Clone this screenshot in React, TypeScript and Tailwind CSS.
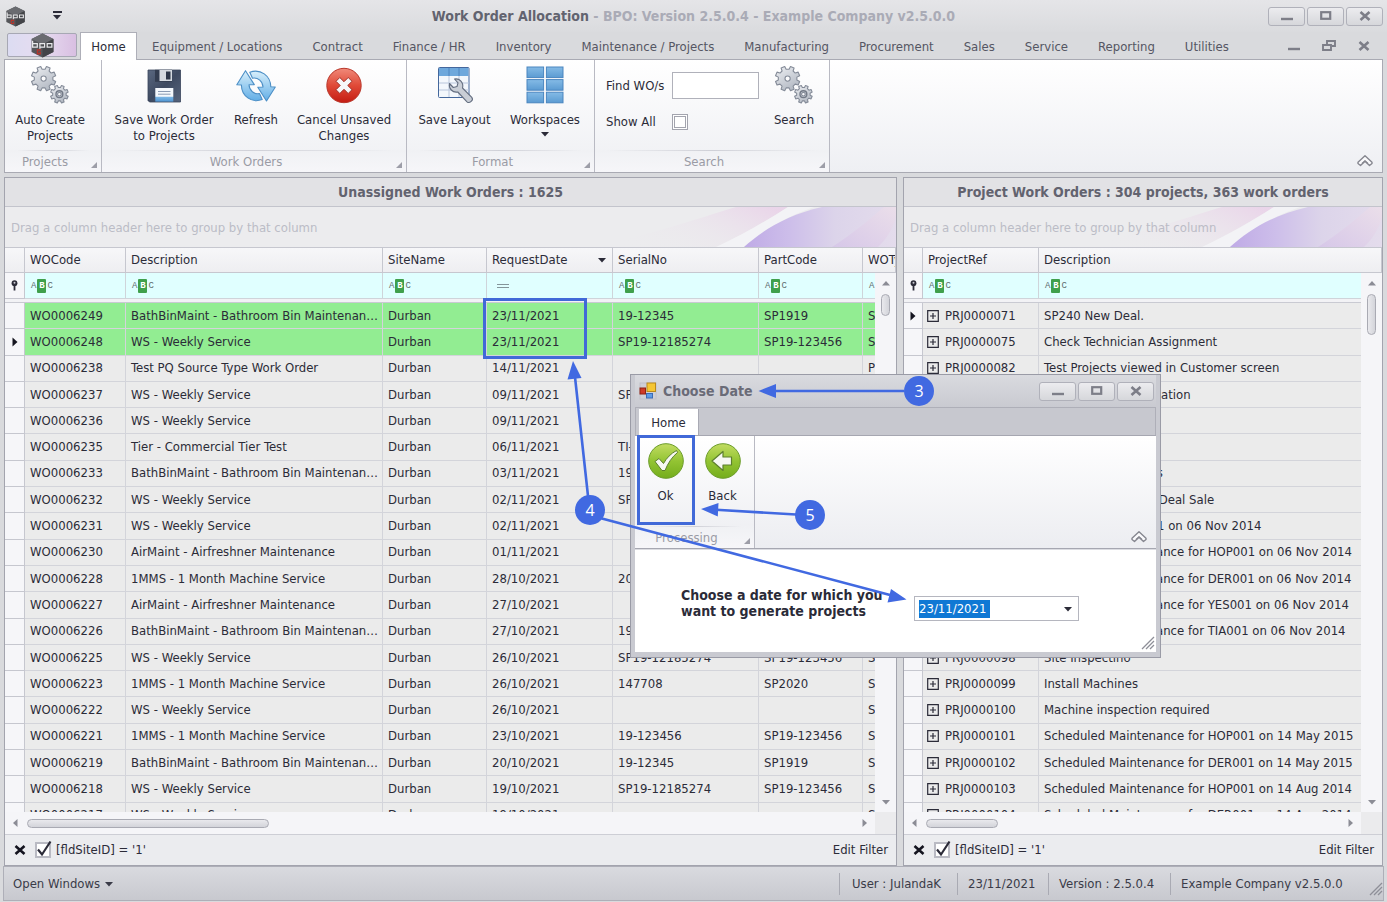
import React from "react";

const BATH_BIN = "BathBinMaint - Bathroom Bin Maintenance Service";

const rows: string[][] = [
  ["WO0006249", BATH_BIN, "23/11/2021", "19-12345", "SP1919", "S"],
  ["WO0006248", "WS - Weekly Service", "23/11/2021", "SP19-12185274", "SP19-123456", "S"],
  ["WO0006238", "Test PQ Source Type Work Order", "14/11/2021", "", "", "P"],
  ["WO0006237", "WS - Weekly Service", "09/11/2021", "SP19-12185274", "SP19-123456", "S"],
  ["WO0006236", "WS - Weekly Service", "09/11/2021", "", "", "S"],
  ["WO0006235", "Tier - Commercial Tier Test", "06/11/2021", "TI-12345", "", "S"],
  ["WO0006233", BATH_BIN, "03/11/2021", "19-12345", "SP1919", "S"],
  ["WO0006232", "WS - Weekly Service", "02/11/2021", "SP19-12185274", "SP19-123456", "S"],
  ["WO0006231", "WS - Weekly Service", "02/11/2021", "", "", "S"],
  ["WO0006230", "AirMaint - Airfreshner Maintenance", "01/11/2021", "", "", "S"],
  ["WO0006228", "1MMS - 1 Month Machine Service", "28/10/2021", "2012345", "SP2020", "S"],
  ["WO0006227", "AirMaint - Airfreshner Maintenance", "27/10/2021", "", "", "S"],
  ["WO0006226", BATH_BIN, "27/10/2021", "19-12345", "SP1919", "S"],
  ["WO0006225", "WS - Weekly Service", "26/10/2021", "SP19-12185274", "SP19-123456", "S"],
  ["WO0006223", "1MMS - 1 Month Machine Service", "26/10/2021", "147708", "SP2020", "S"],
  ["WO0006222", "WS - Weekly Service", "26/10/2021", "", "", "S"],
  ["WO0006221", "1MMS - 1 Month Machine Service", "23/10/2021", "19-123456", "SP19-123456", "S"],
  ["WO0006219", BATH_BIN, "20/10/2021", "19-12345", "SP1919", "S"],
  ["WO0006218", "WS - Weekly Service", "19/10/2021", "SP19-12185274", "SP19-123456", "S"],
  ["WO0006217", "WS - Weekly Service", "19/10/2021", "", "", "S"],
];

const projects: string[][] = [
  ["PRJ0000071", "SP240 New Deal."],
  ["PRJ0000075", "Check Technician Assignment"],
  ["PRJ0000082", "Test Projects viewed in Customer screen"],
  ["PRJ0000083", "New Machine Installation"],
  ["PRJ0000085", "Call Out"],
  ["PRJ0000086", "Site Visit"],
  ["PRJ0000088", "Relocate Dispensers"],
  ["PRJ0000090", "SP240 Combo New Deal Sale"],
  ["PRJ0000091", "Inspection at TIA001 on 06 Nov 2014"],
  ["PRJ0000093", "Scheduled Maintenance for HOP001 on 06 Nov 2014"],
  ["PRJ0000094", "Scheduled Maintenance for DER001 on 06 Nov 2014"],
  ["PRJ0000095", "Scheduled Maintenance for YES001 on 06 Nov 2014"],
  ["PRJ0000096", "Scheduled Maintenance for TIA001 on 06 Nov 2014"],
  ["PRJ0000098", "Site Inspectino"],
  ["PRJ0000099", "Install Machines"],
  ["PRJ0000100", "Machine inspection required"],
  ["PRJ0000101", "Scheduled Maintenance for HOP001 on 14 May 2015"],
  ["PRJ0000102", "Scheduled Maintenance for DER001 on 14 May 2015"],
  ["PRJ0000103", "Scheduled Maintenance for HOP001 on 14 Aug 2014"],
  ["PRJ0000104", "Scheduled Maintenance for DER001 on 14 Aug 2014"],
];

const menuTabs = [
  "Equipment / Locations", "Contract", "Finance / HR", "Inventory", "Maintenance / Projects",
  "Manufacturing", "Procurement", "Sales", "Service", "Reporting", "Utilities",
];

/* ---------- drawings ---------- */

function gearPath(cx: number, cy: number, outer: number, inner: number, teeth: number, hole: number) {
  const pts: string[] = [];
  const step = (Math.PI * 2) / teeth;
  for (let i = 0; i < teeth; i++) {
    const a = i * step - Math.PI / 2 + step / 2;
    const at = (r: number, t: number) => `${(cx + r * Math.cos(a + t)).toFixed(2)} ${(cy + r * Math.sin(a + t)).toFixed(2)}`;
    pts.push(`${at(inner, -step * 0.3)} L${at(outer, -step * 0.2)} L${at(outer, step * 0.2)} L${at(inner, step * 0.3)}`);
  }
  return `M${pts.join(" L")} Z M${cx - hole} ${cy} a${hole} ${hole} 0 1 0 ${hole * 2} 0 a${hole} ${hole} 0 1 0 ${-hole * 2} 0 Z`;
}

const GearsIcon = () => (
  <svg width="40" height="40" viewBox="0 0 40 40" aria-hidden="true">
    <defs>
      <linearGradient id="gear" x1="0" y1="0" x2="0.6" y2="1">
        <stop offset="0" stopColor="#eef0f3" />
        <stop offset="1" stopColor="#b4bac4" />
      </linearGradient>
    </defs>
    <g fill="url(#gear)" stroke="#848b98" strokeWidth="1.1" strokeLinejoin="round" fillRule="evenodd">
      <path d={gearPath(13.6, 13.6, 12.4, 9.4, 8, 2.6)} />
      <path d={gearPath(29.4, 29.2, 9, 6.8, 8, 1.8)} />
    </g>
    <circle cx="29.4" cy="29.2" r="3.4" fill="none" stroke="#737a87" strokeWidth="1.4" />
  </svg>
);

const FloppyIcon = () => (
  <svg width="40" height="40" viewBox="0 0 40 40" aria-hidden="true">
    <defs>
      <linearGradient id="flop" x1="0" y1="0" x2="1" y2="1">
        <stop offset="0" stopColor="#5a6880" />
        <stop offset="0.5" stopColor="#3e4a61" />
        <stop offset="1" stopColor="#56647c" />
      </linearGradient>
      <linearGradient id="flopLabel" x1="0" y1="0" x2="0" y2="1">
        <stop offset="0.62" stopColor="#f4f8fc" />
        <stop offset="0.64" stopColor="#7fb8e6" />
        <stop offset="1" stopColor="#4f95d2" />
      </linearGradient>
    </defs>
    <path d="M4 5h32.500v32H5.500L4 35.500z" fill="url(#flop)" stroke="#39445a" strokeWidth="0.8" />
    <rect x="11" y="4.800" width="17" height="12" fill="#333d50" />
    <rect x="15.500" y="5" width="12.500" height="11" fill="#d5dae1" />
    <rect x="22" y="6.500" width="4.500" height="8" fill="#2e384b" />
    <rect x="11.300" y="23" width="18" height="13.600" fill="url(#flopLabel)" />
    <path d="M14 26.500h12.500M14 29.200h12.500" stroke="#8a9ab3" strokeWidth="1" />
  </svg>
);

const RefreshIcon = () => (
  <svg width="40" height="40" viewBox="0 0 40 40" aria-hidden="true">
    <defs>
      <linearGradient id="refr" x1="0" y1="0" x2="0" y2="1">
        <stop offset="0" stopColor="#d8effb" />
        <stop offset="1" stopColor="#62aee6" />
      </linearGradient>
    </defs>
    <g fill="url(#refr)" stroke="#4c8fc6" strokeWidth="1.1" strokeLinejoin="round">
      <path d="M9.500 5.700 L18.300 19.600 L13 19.800 C13.300 25.500 18 29.600 23.500 28.600 L26.200 34.600 C15.500 38.500 5.500 31 5.400 20 L0.800 19.800 Z" />
      <path d="M30.500 36 L21.800 22.200 L27 22 C26.800 16.300 22 12.300 16.500 13.200 L13.800 7.200 C24.500 3.300 34.600 10.800 34.800 21.800 L39.300 22 Z" />
    </g>
  </svg>
);

const CancelIcon = () => (
  <svg width="40" height="40" viewBox="0 0 40 40" aria-hidden="true">
    <defs>
      <linearGradient id="canc" x1="0" y1="0" x2="0" y2="1">
        <stop offset="0" stopColor="#f08a7a" />
        <stop offset="0.5" stopColor="#e04a38" />
        <stop offset="1" stopColor="#c41c12" />
      </linearGradient>
    </defs>
    <circle cx="20" cy="20.500" r="17.200" fill="url(#canc)" stroke="#b9382c" strokeWidth="1" />
    <path d="M15.800 12.500 L20 16.700 L24.200 12.500 L28 16.300 L23.800 20.500 L28 24.700 L24.200 28.500 L20 24.300 L15.800 28.500 L12 24.700 L16.200 20.500 L12 16.300 Z" fill="#f7f7f9" stroke="#a03028" strokeWidth="1" strokeLinejoin="round" />
  </svg>
);

const LayoutIcon = () => (
  <svg width="40" height="40" viewBox="0 0 40 40" aria-hidden="true">
    <rect x="3.500" y="2.500" width="30.500" height="30" rx="1" fill="#f3f7fc" stroke="#44679c" />
    <rect x="4" y="3" width="29.500" height="8" fill="#6ea8dc" />
    <path d="M14 3v8M24 3v8" stroke="#4f86c0" />
    <path d="M14 11v21M24 11v21M4 18h30M4 25h30" stroke="#b9c6dc" />
    <path d="M14.500 18.500 C13.500 23.500 17.500 28 22.800 27 L32 36.800 C34.500 39 39 35 36.800 32.300 L27.500 23 C29 17.500 24.500 13 19.500 14 L23 17.800 L22 21.500 L18.300 22.500 Z" fill="#c9ced6" stroke="#646e80" strokeWidth="1.100" strokeLinejoin="round" />
  </svg>
);

const WorkspacesIcon = () => (
  <svg width="40" height="40" viewBox="0 0 40 40" aria-hidden="true">
    <defs>
      <linearGradient id="wsp" x1="0" y1="0" x2="0" y2="1">
        <stop offset="0" stopColor="#85bbe6" />
        <stop offset="1" stopColor="#5b9bd2" />
      </linearGradient>
    </defs>
    {[2, 14.6, 27.2].map((y) =>
      [2, 21.4].map((x) => (
        <rect key={`${x}-${y}`} x={x} y={y} width="16.600" height="10.600" fill="url(#wsp)" stroke="#4a85bf" strokeWidth="1" />
      )),
    )}
  </svg>
);

const GreenIcon = ({ kind }: { kind: "ok" | "back" }) => (
  <svg width="40" height="40" viewBox="0 0 40 40" aria-hidden="true">
    <defs>
      <linearGradient id="grn" x1="0" y1="0" x2="0" y2="1">
        <stop offset="0" stopColor="#c2dc62" />
        <stop offset="0.5" stopColor="#93c433" />
        <stop offset="1" stopColor="#74ad1c" />
      </linearGradient>
    </defs>
    <circle cx="20" cy="20" r="17.300" fill="url(#grn)" stroke="#6b9c2a" strokeWidth="1" />
    {kind === "ok" ? (
      <path d="M9 20.500 L13 17.500 L17.500 22.500 C20.500 17 25 12.500 30.500 9.500 L31.500 11.500 C26 16 22 22 19 29.500 L16 29.500 Z" fill="#f6f8f2" stroke="#5c7f2c" strokeWidth="1" strokeLinejoin="round" />
    ) : (
      <path d="M9 20 L20 10.500 L20 16 L28.500 16 L28.500 24 L20 24 L20 29.500 Z" fill="#f6f8f2" stroke="#5c7f2c" strokeWidth="1.200" strokeLinejoin="round" />
    )}
  </svg>
);

const HexLogo = ({ size }: { size: number }) => (
  <svg width={size} height={size} viewBox="0 0 24 24" aria-hidden="true">
    <path d="M12 0.500 L22.500 5.800 V18.200 L12 23.500 L1.500 18.200 V5.800 Z" fill="#55565a" />
    <path d="M12 0.500 L22.500 5.800 L12 11 L1.500 5.800 Z" fill="#6a6b70" />
    <path d="M12 11 L22.500 5.800 V18.200 L12 23.500 Z" fill="#434448" />
    <path d="M2.500 7.500v6h4.500v-3.200h-4.500M9.500 15v-4.700h4.500v3.200h-4.500M16.500 10.300h4.500v3.200h-4.500z" fill="none" stroke="#e8e8ea" strokeWidth="1.200" />
    <path d="M10.500 16.300h-3.300v3.700h2.600v-2" fill="none" stroke="#b5342c" strokeWidth="1.400" />
  </svg>
);

const FormIcon = () => (
  <svg width="18" height="18" viewBox="0 0 18 18" aria-hidden="true">
    <rect x="1" y="1" width="16" height="16" fill="#cfcfd6" stroke="#c0c0c8" />
    <rect x="8" y="1" width="8.500" height="8.500" fill="#f5c634" stroke="#b98a1c" />
    <rect x="1" y="6" width="5.500" height="6" fill="#cf3a26" stroke="#8f2214" />
    <rect x="7.500" y="11.500" width="6" height="4.500" fill="#5f9be6" stroke="#3a6bb5" />
  </svg>
);

const Triangle = ({ dir, className }: { dir: "up" | "down" | "left" | "right"; className?: string }) => {
  const shape = { down: "M1 3h8l-4 4.500z", up: "M1 7.500h8l-4 -4.500z", left: "M7.500 1v8l-4.500 -4z", right: "M2.500 1v8l4.500 -4z" }[dir];
  return (
    <svg width="10" height="10" viewBox="0 0 10 10" className={className} aria-hidden="true">
      <path d={shape} fill="currentColor" />
    </svg>
  );
};

const Collapse = () => (
  <svg width="18" height="14" viewBox="0 0 18 14" aria-hidden="true">
    <path d="M2 8.200 L9 1.800 L16 8.200 V9.500 L13.500 11.500 L9 7.200 L4.500 11.500 L2 9.500 Z" fill="#fafafc" stroke="#85868f" strokeWidth="1.400" strokeLinejoin="round" />
    <path d="M6 9.500 L9 6.800 L12 9.500" fill="none" stroke="#85868f" strokeWidth="1.200" />
  </svg>
);

const Grip = () => (
  <svg width="14" height="14" viewBox="0 0 14 14" aria-hidden="true">
    <path d="M1 13 L13 1 M5 13 L13 5 M9 13 L13 9" stroke="#8e8f98" strokeWidth="1.300" />
  </svg>
);

const Glyph = ({ kind }: { kind: "min" | "max" | "close" | "restore" }) => (
  <svg width="14" height="12" viewBox="0 0 14 12" aria-hidden="true" fill="none" stroke="#7d7e88">
    {kind === "min" && <path d="M1 9h12" strokeWidth="2.400" />}
    {kind === "max" && <rect x="2.200" y="2.200" width="9" height="6.600" strokeWidth="2.200" />}
    {kind === "close" && <path d="M2.500 2 L11.500 10 M11.500 2 L2.500 10" strokeWidth="2.600" />}
    {kind === "restore" && <path d="M5 4V1h8v5h-3M1 5h8v5h-8z" strokeWidth="1.900" />}
  </svg>
);

const Swoosh = ({ id }: { id: string }) => (
  <svg className="absolute right-0 top-0 h-full w-[310px]" viewBox="0 0 310 40" preserveAspectRatio="none" aria-hidden="true">
    <defs>
      <linearGradient id={`${id}p`} x1="0" y1="0.6" x2="1" y2="0.2">
        <stop offset="0" stopColor="#ececee" stopOpacity="0" />
        <stop offset="0.5" stopColor="#eadbea" stopOpacity="0.4" />
        <stop offset="1" stopColor="#e8c6e6" />
      </linearGradient>
      <linearGradient id={`${id}v`} x1="0" y1="0" x2="1" y2="0">
        <stop offset="0" stopColor="#bfaae6" />
        <stop offset="0.3" stopColor="#cdbeea" />
        <stop offset="0.6" stopColor="#dcd4ea" />
        <stop offset="1" stopColor="#e4dcec" />
      </linearGradient>
      <linearGradient id={`${id}w`} x1="0" y1="1" x2="1" y2="0">
        <stop offset="0" stopColor="#d5c4e8" />
        <stop offset="1" stopColor="#ecdfe9" />
      </linearGradient>
    </defs>
    <path d="M0 40 C60 30 110 12 150 0 H202 C180 14 160 26 130 40 Z" fill={`url(#${id}p)`} opacity="0.6" />
    <path d="M130 40 C160 26 180 14 202 0 H228 C200 10 176 24 158 40 Z" fill="#f3f3f6" />
    <path d="M158 40 C176 24 200 8 236 0 H310 V40 Z" fill={`url(#${id}v)`} />
    <path d="M246 40 C268 26 284 12 298 0 H310 V10 C306 24 300 32 292 40 Z" fill={`url(#${id}w)`} opacity="0.8" />
  </svg>
);

/* ---------- small controls ---------- */

const WinButton = ({ kind }: { kind: "min" | "max" | "close" }) => (
  <button aria-label={kind} className="flex h-[19px] w-[37px] items-center justify-center rounded-[3px] border border-[#b0b1ba] bg-gradient-to-b from-[#ececef] to-[#d6d7db]">
    <Glyph kind={kind} />
  </button>
);

const RibbonButton = ({ icon, lines, className, arrow }: { icon: React.ReactNode; lines: string[]; className: string; arrow?: boolean }) => (
  <button className={`flex flex-col items-center pt-[5px] ${className}`}>
    {icon}
    <span className="mt-[7px] flex flex-col items-center whitespace-nowrap leading-4">
      {lines.map((l) => (
        <span key={l}>{l}</span>
      ))}
    </span>
    {arrow && <Triangle dir="down" className="mt-px" />}
  </button>
);

const RibbonGroup = ({ title, className, children }: { title: string; className: string; children: React.ReactNode }) => (
  <section className={`flex shrink-0 flex-col border-r border-[#b9bac3] ${className}`}>
    <div className="flex flex-1 items-start">{children}</div>
    <div className="relative h-[22px] bg-gradient-to-b from-[#f0f1f4] to-[#f6f6f9] pr-4 text-center leading-[23px] text-[#9a9ba5]">
      <div className="absolute inset-x-3 top-0 h-px bg-gradient-to-r from-transparent via-[#cfd0d7] to-transparent" />
      {title}
      <svg className="absolute bottom-1 right-[4px]" width="6" height="6" viewBox="0 0 7 7" aria-hidden="true">
        <path d="M7 0V7H0Z" fill="#9d9ea8" />
      </svg>
    </div>
  </section>
);

const AbcIcon = () => (
  <span className="flex items-center pl-px font-['Liberation_Mono',monospace] text-[9px] leading-3 text-[#5f6c70]">
    A<span className="mx-px flex h-[14px] w-[9px] items-center justify-center rounded-[1px] bg-[#3fa04c] font-bold text-white">B</span>C
  </span>
);

const PinIcon = () => (
  <svg width="9" height="11" viewBox="0 0 9 11" className="mx-auto" aria-hidden="true">
    <circle cx="4.500" cy="3.200" r="2.900" fill="#2b2b38" />
    <circle cx="4.500" cy="2.700" r="1" fill="#c9c9d2" />
    <path d="M4.500 5v5.500" stroke="#2b2b38" strokeWidth="1.800" />
  </svg>
);

const RowPointer = () => (
  <svg width="6" height="10" viewBox="0 0 6 10" className="mx-auto" aria-hidden="true">
    <path d="M0.500 0.500v9l5-4.500z" fill="#14141f" />
  </svg>
);

const ExpandBox = () => (
  <svg width="12" height="12" viewBox="0 0 12 12" className="shrink-0" aria-hidden="true">
    <path d="M0.700 0.700h10.600v10.600h-10.600zM3 6h6M6 3v6" fill="none" stroke="#2b2b38" strokeWidth="1.200" />
  </svg>
);

const thClass = "h-[25px] overflow-hidden whitespace-nowrap border-b border-r border-[#c6c7cf] bg-gradient-to-b from-[#f7f7f9] to-[#eeeef1] px-[5px] py-0 text-left font-normal";
const filterClass = "h-[26px] border-b border-r border-[#cfd4da] bg-[#e0ffff] px-[5px]";
const stubClass = "border-b border-r border-[#c6c7cf] bg-[#f6f6f9]";
const gapClass = "h-1 border-b border-[#c9cad2] bg-[#f2f2f5]";

function Panel({ title, id, thumbV, thumbH, children }: { title: string; id: string; thumbV: string; thumbH: string; children: React.ReactNode }) {
  return (
    <section className="flex min-h-0 min-w-0 flex-col border border-[#a3a4ae] bg-[#ebebed]">
      <h2 className="h-[29px] shrink-0 border-b border-[#c3c4cc] bg-[#e2e2e5] text-center text-sm font-bold leading-[28px] text-[#62636f]">{title}</h2>
      <div className="relative h-[40px] shrink-0 overflow-hidden bg-[#ececee]">
        <Swoosh id={id} />
        <p className="relative px-[6px] leading-[42px] text-[#bbbcc6]">Drag a column header here to group by that column</p>
      </div>
      <div className="relative min-h-0 flex-1 overflow-hidden border-t border-[#c6c7cf]">
        {children}
        <div className="absolute bottom-0 right-0 top-[25px] flex w-[21px] flex-col items-center justify-between bg-[#f5f5f8] py-[5px] text-[#8b8c95]">
          <Triangle dir="up" />
          <div className={`mb-auto mt-[6px] w-[9px] rounded-full border border-[#a9aab3] bg-gradient-to-r from-[#e9e9ed] to-[#d3d4da] ${thumbV}`} />
          <Triangle dir="down" />
        </div>
      </div>
      <div className="flex h-[22px] shrink-0">
        <div className="flex flex-1 items-center bg-[#f5f5f8] px-[5px] text-[#8b8c95]">
          <Triangle dir="left" />
          <div className={`ml-[7px] mr-auto h-[9px] rounded-full border border-[#a9aab3] bg-gradient-to-b from-[#e9e9ed] to-[#d3d4da] ${thumbH}`} />
          <Triangle dir="right" />
        </div>
        <div className="w-[21px] bg-[#ebebed]" />
      </div>
      <div className="flex h-[31px] shrink-0 items-center border-t border-[#cdced5] bg-[#ebecef] px-2">
        <button aria-label="Clear filter" className="flex w-[14px] justify-center">
          <svg width="12" height="10" viewBox="0 0 12 10" aria-hidden="true">
            <path d="M1.500 1 L10.500 9 M10.500 1 L1.500 9" stroke="#14141f" strokeWidth="2.600" />
          </svg>
        </button>
        <label className="ml-2 flex items-center gap-[5px]">
          <span className="relative h-4 w-4">
            <input type="checkbox" defaultChecked className="block h-4 w-4 appearance-none border-2 border-[#b9bac3] bg-white" />
            <svg className="absolute -top-[2px] left-0" width="18" height="18" viewBox="0 0 18 18" aria-hidden="true">
              <path d="M3 9.500 L7 14.500 L15.500 1.500" fill="none" stroke="#2b2b38" strokeWidth="2.200" />
            </svg>
          </span>
          [fldSiteID] = '1'
        </label>
        <button className="ml-auto">Edit Filter</button>
      </div>
    </section>
  );
}

function WorkOrders() {
  return (
    <table className="h-[581px] w-full table-fixed border-separate border-spacing-0">
      <colgroup>
        <col className="w-[20px]" />
        <col className="w-[101px]" />
        <col className="w-[257px]" />
        <col className="w-[104px]" />
        <col className="w-[126px]" />
        <col className="w-[146px]" />
        <col className="w-[104px]" />
        <col />
      </colgroup>
      <thead>
        <tr>
          <th className={thClass} aria-label="Row" />
          <th className={thClass}>WOCode</th>
          <th className={thClass}>Description</th>
          <th className={thClass}>SiteName</th>
          <th className={thClass}>
            <span className="flex items-center justify-between">
              RequestDate
              <Triangle dir="down" />
            </span>
          </th>
          <th className={thClass}>SerialNo</th>
          <th className={thClass}>PartCode</th>
          <th className={thClass}>WOType</th>
        </tr>
        <tr>
          <td className={stubClass}><PinIcon /></td>
          {[0, 1, 2].map((i) => (
            <td key={i} className={filterClass}><AbcIcon /></td>
          ))}
          <td className={filterClass}>
            <div className="ml-[5px] h-1 w-3 border-y border-[#84959a]" />
          </td>
          {[0, 1, 2].map((i) => (
            <td key={i} className={filterClass}><AbcIcon /></td>
          ))}
        </tr>
        <tr>
          <td colSpan={8} className={gapClass} />
        </tr>
      </thead>
      <tbody>
        {rows.map((r, i) => {
          const cell = `overflow-hidden whitespace-nowrap border-b border-r border-[#d3d4da] py-0 pl-[5px] pr-px ${i < 2 ? "bg-[#92ed92]" : "bg-[#ebebeb]"}`;
          return (
            <tr key={r[0]}>
              <td className={stubClass}>{i === 1 && <RowPointer />}</td>
              <td className={cell}>{r[0]}</td>
              <td className={`${cell} text-ellipsis`}>{r[1]}</td>
              <td className={cell}>Durban</td>
              <td className={cell}>{r[2]}</td>
              <td className={cell}>{r[3]}</td>
              <td className={cell}>{r[4]}</td>
              <td className={cell}>{r[5]}</td>
            </tr>
          );
        })}
      </tbody>
    </table>
  );
}

function Projects() {
  const cell = "overflow-hidden whitespace-nowrap border-b border-r border-[#d3d4da] bg-[#ebebeb] py-0";
  return (
    <table className="h-[581px] w-full table-fixed border-separate border-spacing-0">
      <colgroup>
        <col className="w-[19px]" />
        <col className="w-[116px]" />
        <col />
      </colgroup>
      <thead>
        <tr>
          <th className={thClass} aria-label="Row" />
          <th className={thClass}>ProjectRef</th>
          <th className={thClass}>Description</th>
        </tr>
        <tr>
          <td className={stubClass}><PinIcon /></td>
          <td className={filterClass}><AbcIcon /></td>
          <td className={filterClass}><AbcIcon /></td>
        </tr>
        <tr>
          <td colSpan={3} className={gapClass} />
        </tr>
      </thead>
      <tbody>
        {projects.map((p, i) => (
          <tr key={p[0]}>
            <td className={stubClass}>{i === 0 && <RowPointer />}</td>
            <td className={`${cell} px-1`}>
              <span className="flex items-center gap-[6px]"><ExpandBox />{p[0]}</span>
            </td>
            <td className={`${cell} px-[5px]`}>{p[1]}</td>
          </tr>
        ))}
      </tbody>
    </table>
  );
}

function ChooseDateDialog() {
  return (
    <div role="dialog" aria-label="Choose Date" className="absolute left-[630px] top-[374px] flex h-[284px] w-[531px] flex-col border border-[#9a9ba6] bg-[#c9cad1] px-1 pb-[5px]">
      <div className="flex h-8 shrink-0 items-center bg-gradient-to-b from-[#d9dadf] to-[#c9cad1] pl-1">
        <FormIcon />
        <h2 className="ml-[6px] text-sm font-bold text-[#6a6b77]">Choose Date</h2>
        <div className="ml-auto flex gap-[2px] pr-[2px]">
          <WinButton kind="min" />
          <WinButton kind="max" />
          <WinButton kind="close" />
        </div>
      </div>
      <div className="flex h-7 shrink-0 border border-b-0 border-[#aeafb8] bg-[#c7c8cf] pl-[3px] pt-px">
        <button className="h-7 w-[60px] border-r border-[#a9aab4] bg-white">Home</button>
      </div>
      <div className="flex h-[114px] shrink-0 border-y border-[#a6a7b1] bg-gradient-to-b from-white to-[#ecedf1]">
        <RibbonGroup title="Processing" className="w-[120px]">
          <RibbonButton icon={<GreenIcon kind="ok" />} lines={["Ok"]} className="ml-[2px] w-[57px]" />
          <RibbonButton icon={<GreenIcon kind="back" />} lines={["Back"]} className="w-[57px]" />
        </RibbonGroup>
        <button aria-label="Collapse ribbon" className="ml-auto mr-2 self-end pb-1"><Collapse /></button>
      </div>
      <div className="relative flex flex-1 items-start border-t border-[#dcdde2] bg-white pl-[46px] pt-[37px]">
        <label htmlFor="genDate" className="w-[233px] text-sm font-bold leading-4 text-[#2b2b38]">
          Choose a date for which you<br />want to generate projects
        </label>
        <div className="mt-[9px] flex h-[25px] w-[165px] items-center border border-[#b5b6bf] pl-1 pr-[5px]">
          <input id="genDate" defaultValue="23/11/2021" className="h-[18px] w-[71px] bg-[#0f78d4] text-white outline-none" />
          <button aria-label="Open calendar" className="ml-auto"><Triangle dir="down" /></button>
        </div>
        <div className="absolute bottom-[2px] right-[1px]"><Grip /></div>
      </div>
    </div>
  );
}

const Badge = ({ n, className }: { n: number; className: string }) => (
  <span className={`absolute flex h-[30px] w-[30px] items-center justify-center rounded-full bg-[#4169e1] font-['Open_Sans',sans-serif] text-base text-white ${className}`}>{n}</span>
);

function Annotations() {
  return (
    <div className="pointer-events-none absolute inset-0">
      <div className="absolute left-[483px] top-[298px] h-[61px] w-[104px] border-[3px] border-[#4169d8]" />
      <div className="absolute left-[637px] top-[435px] h-[90px] w-[58px] border-[3px] border-[#4169d8]" />
      <svg className="absolute left-0 top-0" width="1387" height="902" viewBox="0 0 1387 902" aria-hidden="true">
        <g stroke="#4169e1" strokeWidth="2.600">
          <path d="M904 391H774M588 496L575 377M600 518L890 595M796 514.500L716 509.800" />
        </g>
        <g fill="#4169e1">
          <path d="M758.500 391L776 384v14zM573 361L567.500 379.500L581.500 378zM906.500 599.500L891 589L887.500 602.500zM701 509L718.500 503L717.800 516.500z" />
        </g>
      </svg>
      <Badge n={3} className="left-[904px] top-[376px]" />
      <Badge n={4} className="left-[575px] top-[495px]" />
      <Badge n={5} className="left-[795px] top-[500px]" />
    </div>
  );
}

const statusCell = "flex h-[22px] items-center border-l border-[#a9aab3]";

export default function App() {
  return (
    <div className="relative flex h-screen flex-col overflow-hidden bg-[#d9dadd] font-['DejaVu_Sans_Condensed','DejaVu_Sans',sans-serif] text-[13px] leading-4 text-[#2b2b38]">
      <header className="grid h-8 shrink-0 grid-cols-[1fr_auto_1fr] items-center bg-gradient-to-b from-[#e5e5e8] to-[#dadbde] px-1">
        <div className="flex items-center pl-px text-[#2b2b38]">
          <HexLogo size={21} />
          <button aria-label="Customize toolbar" className="ml-[26px] flex flex-col items-center">
            <span className="h-[2px] w-[9px] bg-[#2b2b38]" />
            <Triangle dir="down" className="-mt-px" />
          </button>
        </div>
        <h1 className="whitespace-nowrap text-sm font-bold text-[#aaabb6]">
          <span className="text-[#62636f]">Work Order Allocation</span> - BPO: Version 2.5.0.4 - Example Company v2.5.0.0
        </h1>
        <div className="flex justify-end gap-[2px]">
          <WinButton kind="min" />
          <WinButton kind="max" />
          <WinButton kind="close" />
        </div>
      </header>

      <nav className="flex h-[27px] shrink-0 items-start pl-[7px] text-[#555663]">
        <button aria-label="Application menu" className="mr-[3px] mt-px flex h-6 w-[70px] items-center justify-center rounded-[2px] border border-[#a7a8b4] bg-gradient-to-r from-[#dcdcf2] via-[#e6dcf0] to-[#d9bfe2]">
          <HexLogo size={25} />
        </button>
        <button className="relative z-10 h-7 w-[57px] border border-b-0 border-[#aeafb8] bg-white pt-px text-[#2b2b38]">Home</button>
        <div className="flex">
          {menuTabs.map((t) => (
            <button key={t} className="h-[29px] whitespace-nowrap px-[15px]">{t}</button>
          ))}
        </div>
        <div className="ml-auto flex h-[27px] items-center gap-[21px] pr-4">
          <button aria-label="Minimize child"><Glyph kind="min" /></button>
          <button aria-label="Restore child"><Glyph kind="restore" /></button>
          <button aria-label="Close child"><Glyph kind="close" /></button>
        </div>
      </nav>

      <div className="mx-1 flex h-[114px] shrink-0 border border-[#a9aab3] bg-gradient-to-b from-white to-[#eeeff3]">
        <RibbonGroup title="Projects" className="w-[97px]">
          <RibbonButton icon={<GearsIcon />} lines={["Auto Create", "Projects"]} className="w-[90px]" />
        </RibbonGroup>
        <RibbonGroup title="Work Orders" className="w-[305px]">
          <RibbonButton icon={<FloppyIcon />} lines={["Save Work Order", "to Projects"]} className="ml-[2px] w-[120px]" />
          <RibbonButton icon={<RefreshIcon />} lines={["Refresh"]} className="w-16" />
          <RibbonButton icon={<CancelIcon />} lines={["Cancel Unsaved", "Changes"]} className="w-28" />
        </RibbonGroup>
        <RibbonGroup title="Format" className="w-[188px]">
          <RibbonButton icon={<LayoutIcon />} lines={["Save Layout"]} className="ml-[2px] w-[91px]" />
          <RibbonButton icon={<WorkspacesIcon />} lines={["Workspaces"]} arrow className="w-[90px]" />
        </RibbonGroup>
        <RibbonGroup title="Search" className="w-[235px]">
          <div className="grid grid-cols-[66px_87px] items-center gap-y-[15px] pl-[11px] pt-3">
            <label htmlFor="findWo" className="whitespace-nowrap">Find WO/s</label>
            <input id="findWo" className="h-[27px] w-full border border-[#b0b1ba] bg-white px-1" />
            <label htmlFor="showAll" className="whitespace-nowrap">Show All</label>
            <input id="showAll" type="checkbox" className="h-4 w-4 appearance-none border-[3px] border-double border-[#a3a4ae] bg-white" />
          </div>
          <RibbonButton icon={<GearsIcon />} lines={["Search"]} className="w-[73px]" />
        </RibbonGroup>
        <button aria-label="Collapse ribbon" className="ml-auto mr-2 self-end pb-1"><Collapse /></button>
      </div>

      <main className="mx-1 mt-1 grid min-h-0 flex-1 grid-cols-[893fr_480fr] gap-x-[6px]">
        <Panel title="Unassigned Work Orders : 1625" id="l" thumbV="h-[22px]" thumbH="w-[242px]">
          <WorkOrders />
        </Panel>
        <Panel title="Project Work Orders : 304 projects, 363 work orders" id="r" thumbV="h-[41px]" thumbH="w-[72px]">
          <Projects />
        </Panel>
      </main>

      <footer className="mx-[3px] mb-px flex h-[35px] shrink-0 items-center border border-[#aeafb8] bg-gradient-to-b from-[#d9dadf] to-[#c8c9cf] pl-[9px] text-[#3a3b48]">
        <button className="flex items-center gap-1">Open Windows <Triangle dir="down" /></button>
        <div className="ml-auto flex">
          <span className={`${statusCell} w-[118px] pl-3`}>User : JulandaK</span>
          <span className={`${statusCell} w-[91px] pl-[10px]`}>23/11/2021</span>
          <span className={`${statusCell} w-[122px] pl-[10px]`}>Version : 2.5.0.4</span>
          <span className={`${statusCell} w-[199px] pl-[10px]`}>Example Company v2.5.0.0</span>
        </div>
        <div className="self-end pb-1"><Grip /></div>
      </footer>

      <ChooseDateDialog />
      <Annotations />
    </div>
  );
}
